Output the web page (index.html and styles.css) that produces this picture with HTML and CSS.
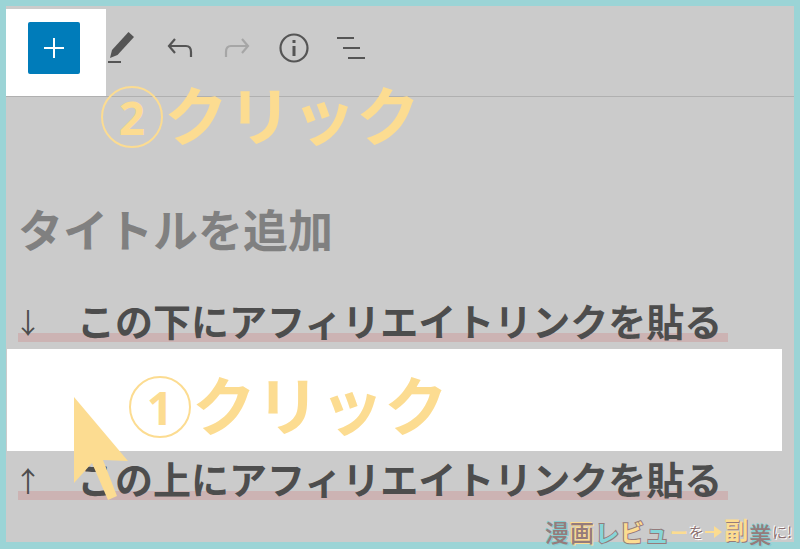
FILE: index.html
```html
<!DOCTYPE html>
<html lang="ja">
<head>
    <meta charset="UTF-8">
    <meta name="viewport" content="width=device-width, initial-scale=1.0">
    <title>タイトルを追加</title>

    <link rel="stylesheet" href="styles.css">
</head>
<body>

    <div class="editor">
        <header class="toolbar">
            <div class="spot">
                <button class="add" type="button" aria-label="追加">
                    <svg width="20" height="20" viewBox="0 0 20 20"><path d="M10 0v20M0 10h20" stroke="#fff" stroke-width="2"/></svg>
                </button>
            </div>
            <button class="tool tool_edit" type="button" aria-label="編集">
                <svg width="27" height="32" viewBox="0 0 27 32">
                    <path d="M20.500 0L26 5 9.500 23 2 26 4 18z" fill="#555"/>
                    <path d="M0 30h13" stroke="#555" stroke-width="2"/>
                </svg>
            </button>
            <button class="tool" type="button" aria-label="元に戻す">
                <svg width="26" height="20" viewBox="0 0 26 20" fill="none" stroke="#555" stroke-width="2.200"><path d="M8 1L2 8l6 7M2 8h17q5 0 5 6v5"/></svg>
            </button>
            <button class="tool" type="button" aria-label="やり直す" disabled>
                <svg width="26" height="20" viewBox="0 0 26 20" fill="none" stroke="#a6a6a6" stroke-width="2.200"><path d="M18 1l6 7-6 7M24 8H7q-5 0-5 6v5"/></svg>
            </button>
            <button class="tool" type="button" aria-label="詳細">
                <svg width="30" height="30" viewBox="0 0 30 30">
                    <circle cx="15" cy="15" r="13.500" fill="none" stroke="#555" stroke-width="2.200"/>
                    <path d="M15 7v3M15 13v10" stroke="#555" stroke-width="3"/>
                </svg>
            </button>
            <button class="tool" type="button" aria-label="リスト表示">
                <svg width="30" height="24" viewBox="0 0 30 24"><path d="M1 2h17M7 12h17M12 22h17" stroke="#555" stroke-width="2.200"/></svg>
            </button>
        </header>

        <main class="content">
            <h1 class="title">タイトルを追加</h1>
            <p class="line"><span class="marker"><span class="arrow">↓</span>この下にアフィリエイトリンクを貼る</span></p>
            <div class="blank"></div>
            <p class="line"><span class="marker"><span class="arrow">↑</span>この上にアフィリエイトリンクを貼る</span></p>
        </main>
    </div>

    <p class="note note_second"><span class="number">2</span>クリック</p>
    <p class="note note_first"><span class="number">1</span>クリック</p>
    <svg class="cursor" width="55" height="104" viewBox="0 0 55 104"><path d="M0 0L54 64 29 63 43 99 34 103 18 66 0 86z" fill="#fcdc91"/></svg>

    <p class="logo">
        <span class="brown on_aqua">漫</span>
        <span class="brown on_gold">画</span>
        <span class="aqua">レ</span>
        <span class="gold">ビ</span>
        <span class="aqua">ュ</span>
        <span class="bar">ー</span>
        <span class="small">を</span>
        <svg width="18" height="14" viewBox="0 0 18 14"><path d="M0 6h9V1l8 6-8 6V8H0z" fill="#fcdc91"/></svg>
        <span class="gold high">副</span>
        <span class="brown on_aqua low">業</span>
        <span class="small">に!</span>
    </p>

</body>
</html>
```
FILE: styles.css
```css
*,*::after,*::before{
    box-sizing: border-box;
    margin: 0;
    padding: 0;
}

body{
    position: relative;
    min-height: 100vh;
    display: flex;
    padding: 6px 6px 7px;
    background-color: #9bd4d6;
    color: #4d4d4d;
    font-family: "Noto Sans CJK JP", sans-serif;
    overflow: hidden;
}

.editor{
    flex: 1;
    background-color: #cbcbcb;
}

.toolbar{
    display: flex;
    align-items: center;
    height: 91px;
    padding-top: 3px;
    border-bottom: 1px solid #b0b0b0;
}

.spot{
    display: flex;
    justify-content: center;
    width: 100px;
    height: 87px;
    padding: 13px 4px 0 0;
    background-color: #fff;
}

.add{
    display: flex;
    align-items: center;
    justify-content: center;
    width: 52px;
    height: 52px;
    border: 0;
    border-radius: 2px;
    background-color: #007cba;
}

.tool{
    display: flex;
    align-items: center;
    justify-content: center;
    width: 57px;
    height: 78px;
    margin-bottom: 9px;
    border: 0;
    background: none;
}

.tool_edit{
    width: 45px;
    padding-left: 2px;
    justify-content: flex-start;
}

.content{
    padding: 102px 12px 0 1px;
}

.title{
    padding-left: 11px;
    color: #808080;
    font-size: 45px;
    line-height: 60px;
    margin-bottom: 34px;
}

.line{
    display: flex;
    height: 56px;
    padding-left: 11px;
    font-size: 38px;
    font-weight: bold;
    line-height: 54px;
    white-space: nowrap;
}

.marker{
    display: flex;
    padding-right: 6px;
    background: linear-gradient(#ccb3b3, #ccb3b3) no-repeat 0 40px / 100% 9px;
}

.arrow{
    width: 59px;
    padding-top: 2px;
    font-size: 28px;
    font-weight: normal;
    text-indent: -4px;
}

.blank{
    height: 102px;
    background-color: #fff;
}

.note{
    position: absolute;
    display: flex;
    align-items: flex-start;
    gap: 1px;
    color: #fcdc91;
    font-size: 64px;
    font-weight: bold;
    line-height: 52px;
}

.note_second{
    left: 101px;
    top: 86px;
}

.note_first{
    left: 129px;
    top: 376px;
}

.number{
    display: flex;
    align-items: center;
    justify-content: center;
    width: 62px;
    height: 62px;
    border: 2px solid #fcdc91;
    border-radius: 50%;
    font-family: "Open Sans", sans-serif;
    font-size: 46px;
}

.cursor{
    position: absolute;
    left: 74px;
    top: 397px;
}

.logo{
    position: absolute;
    right: 8px;
    bottom: 0;
    display: flex;
    align-items: center;
    gap: 1px;
    height: 34px;
    font-size: 24px;
    font-weight: bold;
    line-height: 28px;
}

.brown{
    color: #957b7b;
    font-weight: 500;
}

.on_aqua{
    text-shadow: 1px 1px #86cdd0, -1px -1px #86cdd0;
}

.on_gold{
    text-shadow: 1px 1px #fcdc91, -1px -1px #fcdc91;
}

.aqua,
.gold{
    paint-order: stroke;
    -webkit-text-stroke: 2px #957b7b;
}

.aqua{
    color: #86d5d8;
}

.gold,
.bar{
    color: #fcdc91;
}

.bar{
    font-size: 18px;
}

.high{
    margin-bottom: 6px;
    -webkit-text-stroke: 0;
    text-shadow: 1px 1px #957b7b;
}

.low{
    margin-top: 2px;
    font-size: 22px;
}

.small{
    color: #8b7070;
    font-size: 15px;
    font-weight: normal;
    text-shadow: 1px 1px #fff, -1px -1px #fff;
}
```
